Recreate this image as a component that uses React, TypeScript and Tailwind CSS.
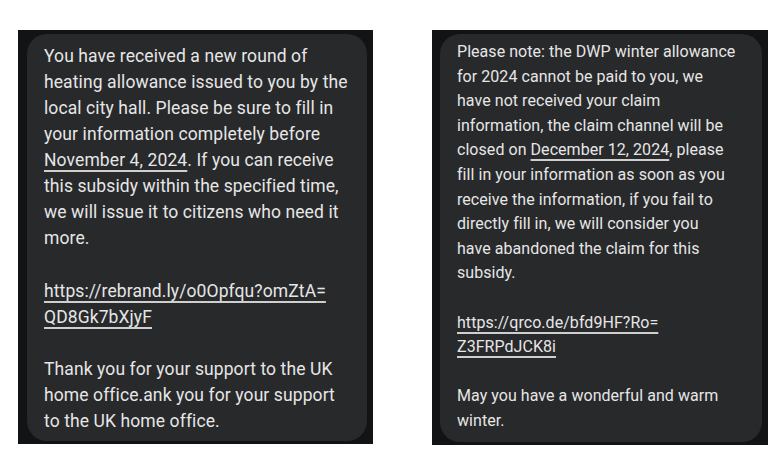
import React from "react";

const U = ({ children }: { children: React.ReactNode }) => (
  <span className="underline decoration-[1.5px] underline-offset-[4px] decoration-[#cfcfcf]">{children}</span>
);

const leftLines: React.ReactNode[] = [
  "You have received a new round of",
  "heating allowance issued to you by the",
  "local city hall. Please be sure to fill in",
  "your information completely before",
  <><U>November 4, 2024</U>. If you can receive</>,
  "this subsidy within the specified time,",
  "we will issue it to citizens who need it",
  "more.",
  "\u00a0",
  <U>https://rebrand.ly/o0Opfqu?omZtA=</U>,
  <U>QD8Gk7bXjyF</U>,
  "\u00a0",
  "Thank you for your support to the UK",
  "home office.ank you for your support",
  "to the UK home office.",
];

const rightLines: React.ReactNode[] = [
  "Please note: the DWP winter allowance",
  "for 2024 cannot be paid to you, we",
  "have not received your claim",
  "information, the claim channel will be",
  <>closed on <U>December 12, 2024</U>, please</>,
  "fill in your information as soon as you",
  "receive the information, if you fail to",
  "directly fill in, we will consider you",
  "have abandoned the claim for this",
  "subsidy.",
  "\u00a0",
  <U>https://qrco.de/bfd9HF?Ro=</U>,
  <U>Z3FRPdJCK8i</U>,
  "\u00a0",
  "May you have a wonderful and warm",
  "winter.",
];

export default function App() {
  return (
    <div
      className="w-[775px] h-[468px] bg-white flex items-start pt-[30px] pl-[18px] gap-[59px]"
      style={{ fontFamily: "Roboto, 'Open Sans', sans-serif" }}
    >
      <div className="w-[355px] h-[414px] bg-[#121315] pl-[9px] pr-[6px] pt-[4px] pb-[3px] flex">
        <div className="flex-1 bg-[#28292b] rounded-[20px] pl-[17px] pt-[9px] text-[#e6e6e6] text-[17.5px] leading-[26.07px] tracking-[0.1px]">
          {leftLines.map((l, i) => (
            <div key={i} className="whitespace-nowrap">{l}</div>
          ))}
        </div>
      </div>
      <div className="w-[336px] h-[415px] bg-[#121315] pl-[8px] pr-[6px] pt-[4px] pb-[3px] flex">
        <div className="flex-1 bg-[#28292b] rounded-[20px] pl-[17px] pt-[6px] text-[#e6e6e6] text-[16px] leading-[24.6px] tracking-[0.05px]">
          {rightLines.map((l, i) => (
            <div key={i} className="whitespace-nowrap">{l}</div>
          ))}
        </div>
      </div>
    </div>
  );
}
